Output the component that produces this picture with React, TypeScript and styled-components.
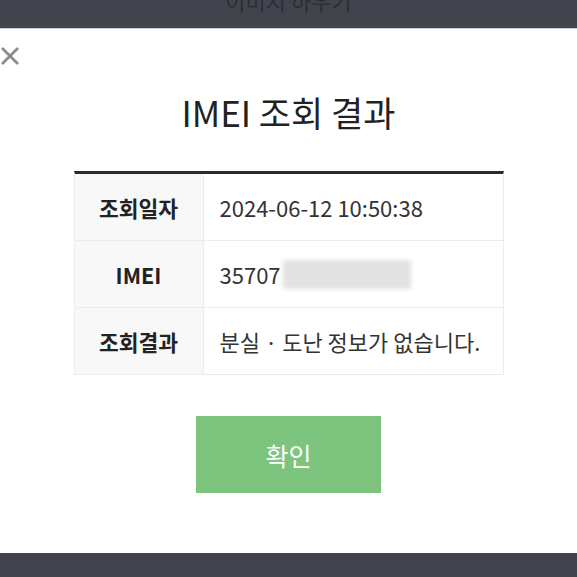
import React from "react";
import styled, { createGlobalStyle } from "styled-components";

const Global = createGlobalStyle`
  html, body { margin: 0; padding: 0; background: #fff; }
  body { font-family: "Noto Sans CJK KR", "Noto Sans", sans-serif; overflow: hidden; }
`;

const Page = styled.div`
  width: 577px;
  height: 577px;
  display: flex;
  flex-direction: column;
  overflow: hidden;
`;

const TopBar = styled.div`
  height: 28px;
  flex: none;
  background: #41444d;
  border-bottom: 1px solid #c9d1da;
  overflow: hidden;
  display: flex;
  justify-content: center;
`;

const TopLabel = styled.span`
  margin-top: -16px;
  font-size: 22px;
  color: #2c2e35;
  line-height: 32px;
`;

const Modal = styled.div`
  position: relative;
  flex: 1;
  background: #fff;
  display: flex;
  flex-direction: column;
  align-items: center;
`;

const BottomBar = styled.div`
  height: 24px;
  flex: none;
  background: #41444d;
`;

const Close = styled.button`
  position: absolute;
  left: 0;
  top: 17px;
  width: 20px;
  height: 20px;
  padding: 0;
  border: 0;
  background: none;
  display: flex;
  align-items: center;
  justify-content: center;
`;

const Title = styled.h1`
  margin: 53px 0 0;
  font-size: 35px;
  font-weight: 400;
  line-height: 60px;
  color: #222;
`;

const Table = styled.div`
  margin-top: 29px;
  width: 428px;
  border-top: 3px solid #2b2b2b;
  border-left: 1px solid #ececec;
  border-right: 1px solid #ececec;
  display: grid;
  grid-template-columns: 129px 1fr;
`;

const Head = styled.div`
  height: 66px;
  background: #f8f8f8;
  border-bottom: 1px solid #ececec;
  border-right: 1px solid #ececec;
  display: flex;
  align-items: center;
  justify-content: center;
  font-size: 21.5px;
  font-weight: 700;
  color: #222;
`;

const Cell = styled.div`
  height: 66px;
  border-bottom: 1px solid #ececec;
  display: flex;
  align-items: center;
  padding-left: 16px;
  font-size: 22px;
  color: #333;
`;

const Blur = styled.span`
  display: inline-block;
  width: 128px;
  height: 29px;
  background: #e2e2e2;
  filter: blur(2px);
  margin-left: 2px;
`;

const Confirm = styled.button`
  margin-top: 41px;
  width: 185px;
  height: 77px;
  border: 0;
  background: #7dc47f;
  color: #fff;
  font-family: "Noto Sans CJK KR", sans-serif;
  font-size: 25px;
  cursor: pointer;
`;

export default function App() {
  return (
    <Page>
      <Global />
      <TopBar>
        <TopLabel>이미지 하우기</TopLabel>
      </TopBar>
      <Modal>
        <Close aria-label="닫기">
          <svg width="18" height="18" viewBox="0 0 18 18">
            <path d="M1 1 L17 17 M17 1 L1 17" stroke="#8a8a8a" strokeWidth="2.8" />
          </svg>
        </Close>
        <Title>IMEI 조회 결과</Title>
        <Table>
          <Head>조회일자</Head>
          <Cell>2024-06-12 10:50:38</Cell>
          <Head>IMEI</Head>
          <Cell>
            35707
            <Blur />
          </Cell>
          <Head>조회결과</Head>
          <Cell>분실 · 도난 정보가 없습니다.</Cell>
        </Table>
        <Confirm>확인</Confirm>
      </Modal>
      <BottomBar />
    </Page>
  );
}
